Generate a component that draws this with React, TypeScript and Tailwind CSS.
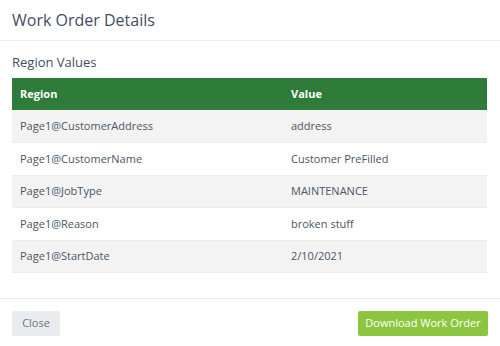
const rows = [
  { region: "Page1@CustomerAddress", value: "address" },
  { region: "Page1@CustomerName", value: "Customer PreFilled" },
  { region: "Page1@JobType", value: "MAINTENANCE" },
  { region: "Page1@Reason", value: "broken stuff" },
  { region: "Page1@StartDate", value: "2/10/2021" },
];

export default function App() {
  return (
    <div className="w-[500px] h-[346px] bg-white font-['Open_Sans',sans-serif] text-[#4a5568]">
      {/* Header */}
      <div className="h-[41px] flex items-center px-3 border-b border-[#ebebeb]">
        <h1 className="text-[16px] text-[#3f4d63] leading-none">Work Order Details</h1>
      </div>

      {/* Body */}
      <div className="px-3 pt-[12px] pb-[25px]">
        <h2 className="text-[13px] font-medium text-[#3f4d63] h-[25px] leading-[18px]">Region Values</h2>
        <table className="w-[475px] table-fixed border-collapse text-[11px]">
          <thead>
            <tr className="bg-[#2e7b3a] h-[32px] text-white">
              <th className="text-left font-bold pl-2 w-[279px]">Region</th>
              <th className="text-left font-bold">Value</th>
            </tr>
          </thead>
          <tbody>
            {rows.map((r, i) => (
              <tr
                key={r.region}
                className={`h-[32.5px] border-b border-[#ececec] ${i % 2 === 0 ? "bg-[#f3f3f3]" : "bg-white"}`}
              >
                <td className="pl-2">{r.region}</td>
                <td>{r.value}</td>
              </tr>
            ))}
          </tbody>
        </table>
      </div>

      {/* Footer */}
      <div className="border-t border-[#ebebeb] px-3 pt-3 flex items-start justify-between">
        <button className="w-[48px] h-[25px] bg-[#e9ecef] rounded-[2px] text-[11px] text-[#6b7280]">Close</button>
        <button className="w-[130px] h-[25px] bg-[#8cc63f] rounded-[2px] text-[11px] text-white">Download Work Order</button>
      </div>
    </div>
  );
}
